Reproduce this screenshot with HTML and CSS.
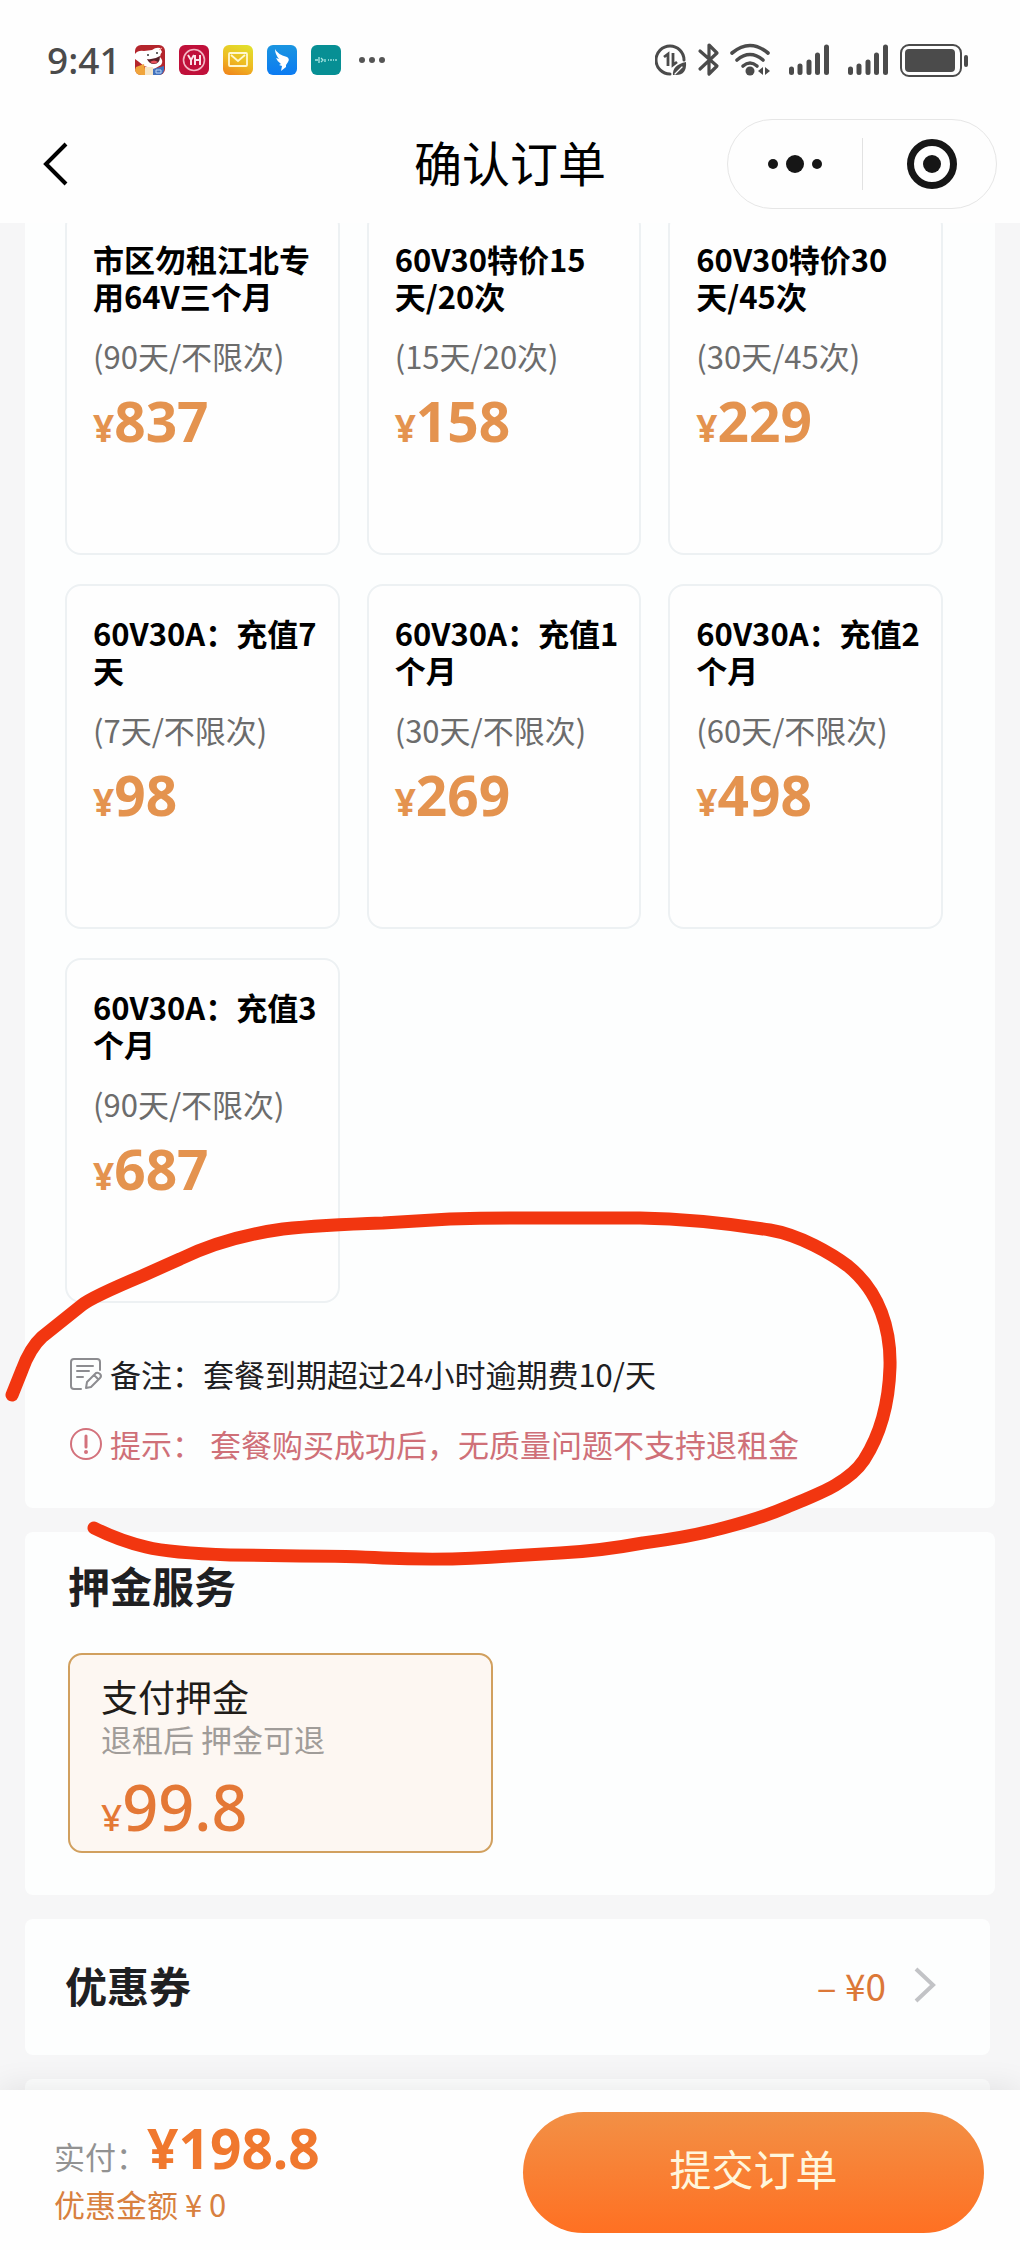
FILE: index.html
```html
<!DOCTYPE html>
<html lang="zh-CN">
<head>
<meta charset="utf-8">
<meta name="viewport" content="width=device-width, initial-scale=1">
<title>确认订单</title>
<link rel="stylesheet" href="styles.css">
</head>
<body>
<div class="page">
  <header class="header">
    <div class="status">
      <div class="status-left">
        <time class="clock">9:41</time>
        <svg class="app" viewBox="0 0 30 30" aria-hidden="true">
          <rect width="30" height="30" rx="6" fill="#b4252c"/>
          <path d="M0 9 Q3 5 9 6 L17 5 Q21 2 25 3 L27 7 Q25 9 25 12 Q29 16 26 20 L19 24 L9 21 Q3 16 0 14Z" fill="#fff"/>
          <path d="M12 14 Q19 15 25 11 Q25 19 19 19 Q14 19 12 14Z" fill="#5a2028"/>
          <path d="M15 17 Q19 14 23 17 Q19 20 15 17Z" fill="#e8505b"/>
          <circle cx="13" cy="10" r="1" fill="#333"/><circle cx="22" cy="8" r="1" fill="#333"/>
          <path d="M24 5l3-2" stroke="#f8b0a8"/>
          <path d="M1 22 L9 19 L11 30 H6 Q1 30 0 25Z" fill="#f0a53c"/>
          <path d="M10 22h8v8h-8z" fill="#f6e6c8"/>
          <path d="M18 24 L29 21 V25 Q28 30 24 30 H18Z" fill="#4272bd"/>
          <path d="M21 25h5v3h-5z" fill="none" stroke="#b9d4f5"/>
        </svg>
        <svg class="app" viewBox="0 0 30 30" aria-hidden="true">
          <rect width="30" height="30" rx="6" fill="#c0103a"/>
          <circle cx="15" cy="15" r="10.5" fill="none" stroke="#f3b6c3" stroke-width="1.6"/>
          <path d="M9 10l3 5v5M15 10l-3 5M16 10v10M21 10v10M16 15h5" fill="none" stroke="#fbe3e8" stroke-width="2"/>
        </svg>
        <svg class="app" viewBox="0 0 30 30" aria-hidden="true">
          <defs><linearGradient id="mail" x1=".7" y1="0" x2=".3" y2="1"><stop offset="0" stop-color="#e2de2c"/><stop offset=".55" stop-color="#eebb22"/><stop offset="1" stop-color="#f08a1c"/></linearGradient></defs>
          <rect width="30" height="30" rx="6" fill="url(#mail)"/>
          <rect x="6" y="8" width="18" height="13" rx="1" fill="none" stroke="#fff8d0" stroke-width="1.8"/>
          <path d="M8 10l7 6 7-6" fill="none" stroke="#fff8d0" stroke-width="1.8"/>
        </svg>
        <svg class="app" viewBox="0 0 30 30" aria-hidden="true">
          <defs><linearGradient id="wing" x1="0" y1="0" x2="0" y2="1"><stop offset="0" stop-color="#1a95e0"/><stop offset="1" stop-color="#0b7bf2"/></linearGradient></defs>
          <rect width="30" height="30" rx="6" fill="url(#wing)"/>
          <path d="M8 4 Q10 9 20 12 Q23 14 21 17 L19 20 L19 22 L14 26 L15 21 L12 20 L14 19 Q10 16 9 13 L12 14 Q8 9 8 4Z" fill="#fff"/>
        </svg>
        <svg class="app" viewBox="0 0 30 30" aria-hidden="true">
          <rect width="30" height="30" rx="6" fill="#078f94"/>
          <path d="M4 15h3M8 12v6M10 13l2 2-2 2M14 14v3M17 15h1M20 14v2M22 15h1M25 14v2" fill="none" stroke="#a8e6e2" stroke-width="1.3"/>
        </svg>
        <svg class="more" viewBox="0 0 26 6" fill="#555" aria-hidden="true"><circle cx="3" cy="3" r="3"/><circle cx="13" cy="3" r="3"/><circle cx="23" cy="3" r="3"/></svg>
      </div>
      <svg class="status-right" viewBox="0 0 314 34" fill="none" stroke="#4b4b4b" stroke-linecap="round" aria-hidden="true">
        <path d="M29 17 A14 14 0 1 0 15 31" stroke-width="3"/>
        <path d="M13 23 V11 L9 14 M18 10 V22 L22 19" stroke-width="2.8" stroke-linecap="butt"/>
        <path d="M18 32 Q17 22 31 19 Q32 32 21 32Z" fill="#4b4b4b" stroke="none"/><path d="M20 31l7-7" stroke="#fff" stroke-width="1.2"/>
        <path d="M45 8 L62 23 L54 31 V2 L62 10 L45 26" stroke-width="3.2" stroke-linejoin="round"/>
        <g stroke-width="3.6"><path d="M77 10 Q95 -5 113 10"/><path d="M82 17 Q95 6 108 17"/><path d="M88 23 Q95 17 102 23"/></g>
        <circle cx="95" cy="28" r="4.5" fill="#4b4b4b" stroke="none"/>
        <path d="M108 24v8l-5-4zM110 24v8l5-4z" fill="#4b4b4b" stroke="none"/>
        <g stroke-width="5"><path d="M136.500 26V29.500M145 23V29.500M154 19V29.500M162.500 12V29.500M171.500 4V29.500"/><path d="M195.500 26V29.500M204 23V29.500M213 19V29.500M221.500 12V29.500M230.500 4V29.500"/></g>
        <rect x="246" y="2" width="60" height="31" rx="8" stroke-width="2"/>
        <rect x="250" y="6" width="50" height="23" rx="4" fill="#4b4b4b" stroke="none"/>
        <path d="M311 14v8" stroke-width="4"/>
      </svg>
    </div>
    <div class="nav">
      <button class="back" type="button" aria-label="返回"><svg viewBox="0 0 26 44"><path d="M23 2 L3 22 L23 42" fill="none" stroke="#000" stroke-width="4"/></svg></button>
      <h1 class="title">确认订单</h1>
      <div class="capsule">
        <button type="button" aria-label="更多"><svg class="dots" viewBox="0 0 56 20" fill="#161616"><circle cx="6" cy="10" r="5"/><circle cx="28" cy="10" r="9"/><circle cx="50" cy="10" r="5"/></svg></button>
        <button type="button" aria-label="关闭"><svg class="target" viewBox="0 0 52 52" fill="#161616"><circle cx="26" cy="26" r="21.500" fill="none" stroke="#161616" stroke-width="7"/><circle cx="26" cy="26" r="9"/></svg></button>
      </div>
    </div>
  </header>

  <main class="content">
    <section class="panel plans">
      <div class="plan-grid">
        <button type="button" class="plan"><span class="plan-name">市区勿租江北专用64V三个月</span><span class="plan-term">(90天/不限次)</span><span class="price"><small>¥</small>837</span></button>
        <button type="button" class="plan"><span class="plan-name">60V30特价15天/20次</span><span class="plan-term">(15天/20次)</span><span class="price"><small>¥</small>158</span></button>
        <button type="button" class="plan"><span class="plan-name">60V30特价30天/45次</span><span class="plan-term">(30天/45次)</span><span class="price"><small>¥</small>229</span></button>
        <button type="button" class="plan"><span class="plan-name">60V30A：充值7天</span><span class="plan-term">(7天/不限次)</span><span class="price"><small>¥</small>98</span></button>
        <button type="button" class="plan"><span class="plan-name">60V30A：充值1个月</span><span class="plan-term">(30天/不限次)</span><span class="price"><small>¥</small>269</span></button>
        <button type="button" class="plan"><span class="plan-name">60V30A：充值2个月</span><span class="plan-term">(60天/不限次)</span><span class="price"><small>¥</small>498</span></button>
        <button type="button" class="plan"><span class="plan-name">60V30A：充值3个月</span><span class="plan-term">(90天/不限次)</span><span class="price"><small>¥</small>687</span></button>
      </div>
      <div class="notes">
        <p class="note"><svg class="note-icon" viewBox="0 0 32 32" fill="none" stroke="#8c8c90" stroke-width="2" stroke-linecap="round" stroke-linejoin="round" aria-hidden="true"><path d="M30 12V4Q30 1 27 1H4Q1 1 1 4V28Q1 31 4 31H11"/><path d="M7 8h16M7 13h12M7 19h6"/><path d="M16 30l1-6 9-9q2-1 4 1t0 4l-9 9zM24 17l4 4"/></svg>备注：套餐到期超过24小时逾期费10/天</p>
        <p class="note warn"><svg class="note-icon" viewBox="0 0 32 32" fill="none" stroke="#d3727c" stroke-width="2" stroke-linecap="round" aria-hidden="true"><circle cx="16" cy="16" r="15"/><path d="M16 8v11" stroke-width="3"/><circle cx="16" cy="24" r="1" fill="#d3727c"/></svg>提示： 套餐购买成功后，无质量问题不支持退租金</p>
      </div>
    </section>

    <section class="panel deposit">
      <h2 class="heading">押金服务</h2>
      <button type="button" class="deposit-card">
        <span class="deposit-name">支付押金</span>
        <span class="deposit-sub">退租后 押金可退</span>
        <span class="deposit-price"><small>¥</small>99.8</span>
      </button>
    </section>

    <section class="panel coupon">
      <h2 class="heading">优惠券</h2>
      <a class="coupon-link" href="#coupon"><span>– ¥0</span><svg class="chevron" viewBox="0 0 22 36" aria-hidden="true"><path d="M2 2 L19 18 L2 34" fill="none" stroke="#c2c3c6" stroke-width="4"/></svg></a>
    </section>

    <section class="panel next"></section>
  </main>

  <footer class="bar">
    <div class="sum">
      <p class="pay">实付：<strong>¥198.8</strong></p>
      <p class="saved">优惠金额 ¥ 0</p>
    </div>
    <button type="button" class="submit">提交订单</button>
  </footer>

  <svg class="mark" viewBox="0 0 1020 380" fill="none" stroke="#f23610" stroke-width="13" stroke-linecap="round" stroke-linejoin="round" aria-hidden="true">
    <path d="M12 195 L22 170 Q30 148 42 137 L82 105 Q92 97 142 76 L180 59 Q225 37 283 29 Q320 25 383 23 L450 19 Q480 18 510 18 H640 Q700 19 770 30 C800 35 832 54 848 66 C880 92 891 130 890 167 C889 200 882 232 864 260 C848 284 815 295 787 307 Q762 318 723 328 Q690 337 643 343 Q600 351 560 353 L510 356 Q450 361 383 358 Q350 356 300 356 L230 355 Q170 353 146 347 Q120 341 94 328"/>
  </svg>
</div>
</body>
</html>
```
FILE: styles.css
```css
* { box-sizing: border-box; }

body {
  margin: 0;
  background: #f6f6f7;
  color: #1f2022;
  font-family: "Noto Sans CJK SC", sans-serif;
  font-size: 31px;
  line-height: 37px;
}

h1, h2, p { margin: 0; }

button {
  margin: 0;
  padding: 0;
  border: 0;
  background: none;
  color: inherit;
  font: inherit;
}

svg { display: block; flex: none; }

.page {
  position: relative;
  display: flex;
  flex-direction: column;
  min-height: 100vh;
  overflow: hidden;
}

/* header */
.header {
  position: relative;
  z-index: 1;
  background: #fefefe;
}

.status {
  display: flex;
  align-items: center;
  justify-content: space-between;
  height: 104px;
  padding: 16px 51px 0 47px;
}

.status-left { display: flex; align-items: center; gap: 14px; }
.clock { color: #4b4b4b; font: 500 37px/44px "Noto Sans", sans-serif; }
.app { width: 30px; height: 30px; }
.more { width: 26px; margin-left: 4px; }
.status-right { width: 314px; height: 34px; }

.nav {
  display: grid;
  grid-template-columns: 270px 1fr 270px;
  align-items: center;
  height: 119px;
  padding: 0 23px;
}

.back { justify-self: start; padding: 10px 20px; }
.back svg { width: 26px; height: 44px; }
.title {
  padding-bottom: 6px;
  color: #000;
  font-size: 48px;
  font-weight: 400;
  line-height: 60px;
  text-align: center;
}

.capsule {
  display: grid;
  grid-template-columns: 1fr 1fr;
  height: 90px;
  border: 1px solid #e6e6e6;
  border-radius: 45px;
}

.capsule button { display: flex; align-items: center; justify-content: center; }
.capsule button + button { position: relative; padding-left: 6px; }
.capsule button + button::before {
  content: "";
  position: absolute;
  left: 0;
  top: 18px;
  bottom: 18px;
  border-left: 1px solid #e2e2e2;
}
.dots { width: 56px; }
.target { width: 52px; }

/* content, scrolled a little under the header */
.content {
  display: flex;
  flex: 1;
  flex-direction: column;
  gap: 24px;
  margin-top: -13px;
  padding: 0 25px;
}

.panel { border-radius: 8px; background: #fdfefe; }
.plans { padding: 0 52px 46px 40px; }

.plan-grid {
  display: grid;
  grid-template-columns: repeat(3, 1fr);
  grid-auto-rows: 345px;
  gap: 29px 27px;
}

.plan {
  display: flex;
  flex-direction: column;
  padding: 28px 14px 0 26px;
  border: 2px solid #edf1f3;
  border-radius: 16px;
  background: #fefefe;
  text-align: left;
}

.plan-name { color: #000; font-weight: 700; }
.plan-term { margin-top: 23px; color: #6c6c6c; }
.price {
  margin-top: 20px;
  color: #e4934f;
  font: 700 55px/54px "Noto Sans", sans-serif;
}
.price small { font-size: 37px; }

.notes {
  display: flex;
  flex-direction: column;
  gap: 33px;
  margin-top: 52px;
  padding-left: 5px;
}

.note { display: flex; align-items: center; gap: 8px; white-space: pre; }
.note-icon { width: 32px; height: 32px; }
.warn { color: #cf7078; }

.heading { font-size: 42px; font-weight: 700; line-height: 54px; }

.deposit { padding: 26px 43px 42px; }

.deposit-card {
  display: flex;
  flex-direction: column;
  width: 425px;
  height: 200px;
  margin-top: 41px;
  padding: 18px 31px 0;
  border: 2px solid #d1a05f;
  border-radius: 14px;
  background: #fdf7f2;
  text-align: left;
}

.deposit-name { color: #201c18; font-size: 37px; line-height: 46px; }
.deposit-sub { color: #a09c99; line-height: 40px; }
.deposit-price {
  margin-top: 16px;
  color: #e47836;
  font: 500 63px/64px "Noto Sans", sans-serif;
}
.deposit-price small { font-size: 37px; }

.coupon {
  display: flex;
  align-items: center;
  justify-content: space-between;
  height: 136px;
  margin-right: 5px;
  padding: 0 54px 4px 40px;
}

.coupon-link {
  display: flex;
  align-items: center;
  gap: 28px;
  color: #dc7838;
  font-size: 37px;
  text-decoration: none;
}
.chevron { width: 22px; height: 36px; }

.next { flex: 1; min-height: 9px; margin-right: 5px; border-radius: 8px 8px 0 0; }

/* bottom bar */
.bar {
  position: relative;
  display: flex;
  align-items: flex-start;
  justify-content: space-between;
  height: 160px;
  padding: 22px 36px 0 54px;
  background: #fefefe;
  box-shadow: 0 -2px 30px rgba(0, 0, 0, .09);
}

.pay { margin-top: 9px; color: #929292; line-height: 54px; }
.pay strong {
  color: #f0782e;
  font: 700 55px/54px "Noto Sans", sans-serif;
}
.saved { color: #d8803f; line-height: 42px; }

.submit {
  width: 461px;
  height: 121px;
  padding-bottom: 10px;
  border-radius: 61px;
  background: linear-gradient(#f29046, #ff7022);
  color: #fff6dc;
  font-size: 42px;
}

/* hand-drawn loop over the notes */
.mark {
  position: absolute;
  z-index: 2;
  top: 1200px;
  left: 0;
  width: 100%;
  pointer-events: none;
}
```
